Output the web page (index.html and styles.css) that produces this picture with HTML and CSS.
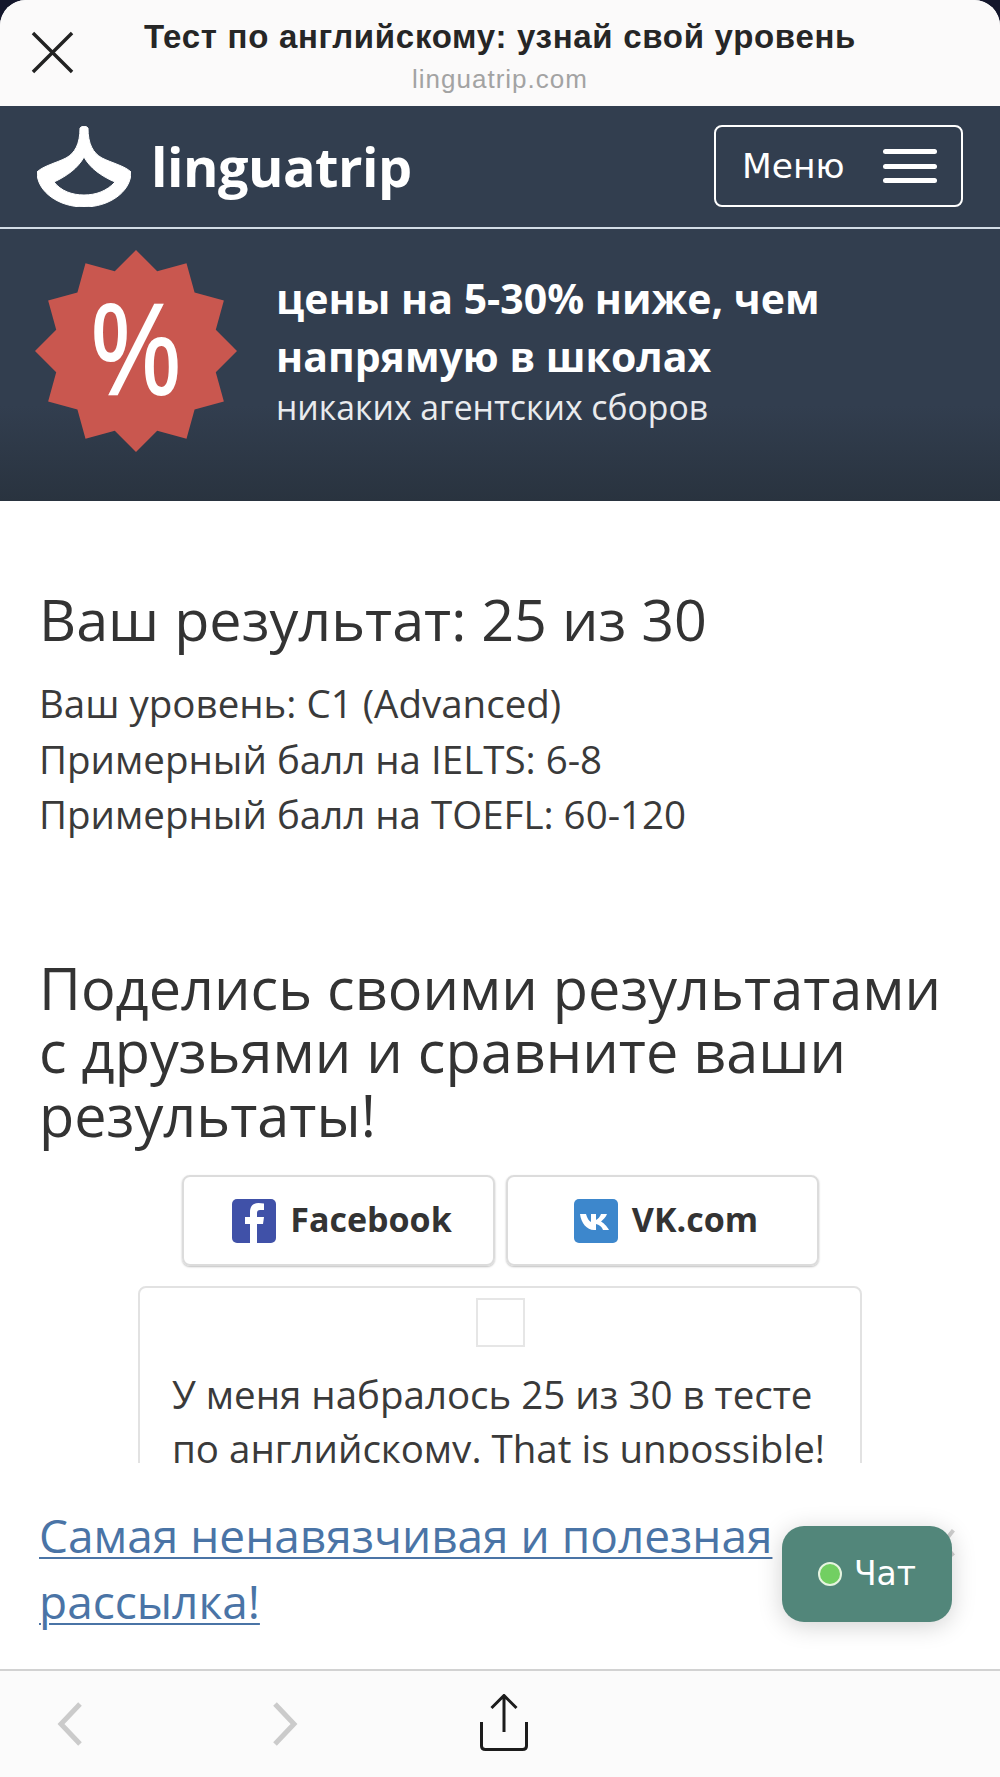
FILE: index.html
```html
<!DOCTYPE html>
<html lang="ru">
<head>
    <meta charset="UTF-8">
    <meta name="viewport" content="width=device-width, initial-scale=1.0">
    <title>Тест по английскому: узнай свой уровень</title>
    <link rel="stylesheet" href="styles.css">
</head>
<body>
<div class="sheet">
    <div class="topbar">
        <svg class="close-icon" viewBox="0 0 44 44"><path d="M2 2L42 42M42 2L2 42"/></svg>
        <div class="topbar-title">Тест по английскому: узнай свой уровень</div>
        <div class="topbar-url">linguatrip.com</div>
    </div>

    <div class="site-header">
        <div class="logo">
            <svg class="logo-mark" viewBox="0 0 94 81"><path fill-rule="evenodd" d="M43 2Q47 -2 51 2C51 18 56 27 65 32C75 37 88 40 94 46C94 66 72 81 47 81C22 81 0 66 0 46C6 40 19 37 29 32C38 27 43 18 43 2ZM47 31C41 42 30 50 17 56C24 65 35 69 47 69C59 69 70 65 78 56C64 50 53 42 47 31Z"/></svg>
            <span class="logo-text">linguatrip</span>
        </div>
        <div class="menu-btn">
            <span>Меню</span>
            <span class="burger"><i></i><i></i><i></i></span>
        </div>
    </div>

    <div class="banner">
        <svg class="badge" viewBox="0 0 200 200">
            <polygon points="100,0 121,21 150,13 158,42 187,50 179,79 200,100 179,121 187,150 158,158 150,187 121,179 100,200 79,179 50,187 42,158 13,150 21,121 0,100 21,79 13,50 42,42 50,13 79,21"/>
            <text x="100" y="143" text-anchor="middle" textLength="88" lengthAdjust="spacingAndGlyphs" class="badge-text">%</text>
        </svg>
        <div class="banner-text">
            <div class="banner-title">цены на 5-30% ниже, чем<br>напрямую в школах</div>
            <div class="banner-sub">никаких агентских сборов</div>
        </div>
    </div>

    <div class="content">
        <h1>Ваш результат: 25 из 30</h1>
        <p class="result">Ваш уровень: C1 (Advanced)<br>Примерный балл на IELTS: 6-8<br>Примерный балл на TOEFL: 60-120</p>
        <h2>Поделись своими результатами с друзьями и сравните ваши результаты!</h2>
        <div class="share">
            <div class="share-btn">
                <svg class="share-icon" viewBox="0 0 44 44"><rect width="44" height="44" rx="5" fill="#4051a8"/><path fill="#fff" d="M25 44V25H31L32 18H25V14C25 12 26 11 28 11H32V4.500C30 4.200 28.500 4 26.500 4C21.500 4 18 7 18 13V18H13V25H18V44Z"/></svg>
                <span class="share-label">Facebook</span>
            </div>
            <div class="share-btn">
                <svg class="share-icon" viewBox="0 0 44 44"><rect width="44" height="44" rx="5" fill="#3d87cc"/><path fill="#fff" d="M6 15H12C13 19 15 22 17 23V15H22V21C24 20 26 18 27 15H33C32 18 29 21 27 22.500C29 23.500 33 27 35 31H29C28 28 25 25.500 22 25V31H20C13 31 7 24 6 15Z"/></svg>
                <span class="share-label">VK.com</span>
            </div>
        </div>
        <div class="quote">
            <div class="quote-thumb"></div>
            <p>У меня набралось 25 из 30 в тесте по английскому. That is unpossible!</p>
        </div>
    </div>

    <div class="subscribe">
        <a href="#">Самая ненавязчивая и полезная рассылка!</a>
        <svg class="sub-close" viewBox="0 0 20 40"><path d="M2 24L18 4M2 16L18 36"/></svg>
        <div class="chat"><i class="chat-dot"></i>Чат</div>
    </div>

    <div class="toolbar">
        <svg class="nav-icon back" viewBox="0 0 26 44"><path d="M23 2L4 22L23 42"/></svg>
        <svg class="nav-icon forward" viewBox="0 0 26 44"><path d="M3 2L22 22L3 42"/></svg>
        <svg class="share-sheet" viewBox="0 0 49 57"><path d="M24.500 38V2M12 14L24.500 1.500L37 14M2 28V52Q2 55.500 6 55.500H43Q47 55.500 47 52V28"/></svg>
    </div>
</div>
</body>
</html>
```

FILE: styles.css
```css
* {
    box-sizing: border-box;
}
html, body {
    margin: 0;
    height: 100%;
}
body {
    background-color: #14172c;
    font-family: 'Open Sans', sans-serif;
    color: #333;
}
.sheet {
    position: relative;
    height: 1777px;
    display: flex;
    flex-direction: column;
    background-color: #fff;
    border-radius: 26px 26px 0 0;
    overflow: hidden;
}

/* browser top bar */
.topbar {
    position: relative;
    height: 106px;
    flex: none;
    background-color: #fbfafa;
    text-align: center;
}
.close-icon {
    position: absolute;
    left: 31px;
    top: 31px;
    width: 43px;
    height: 43px;
    fill: none;
    stroke: #222;
    stroke-width: 3.500;
}
.topbar-title {
    padding-top: 18px;
    font-family: 'Liberation Sans', Arial, sans-serif;
    font-weight: 700;
    font-size: 33px;
    line-height: 38px;
    letter-spacing: 0.7px;
    color: #262626;
}
.topbar-url {
    padding-top: 7px;
    font-family: 'Liberation Sans', Arial, sans-serif;
    font-size: 26px;
    line-height: 32px;
    letter-spacing: 1px;
    color: #a3a3a3;
}

/* site header */
.site-header {
    height: 123px;
    flex: none;
    display: flex;
    align-items: center;
    justify-content: space-between;
    padding: 0 37px 1px;
    background-color: #323e4f;
    border-bottom: 2px solid #d3dce6;
}
.logo {
    display: flex;
    align-items: center;
    gap: 20px;
}
.logo-mark {
    width: 94px;
    height: 81px;
    fill: #fff;
    stroke: #fff;
    stroke-width: 1;
    stroke-linejoin: round;
}
.logo-text {
    font-family: 'Open Sans', sans-serif;
    font-weight: 700;
    font-size: 54px;
    line-height: 70px;
    letter-spacing: -0.5px;
    color: #fff;
}
.menu-btn {
    width: 249px;
    height: 82px;
    display: flex;
    align-items: center;
    justify-content: space-between;
    padding: 0 24px 0 26px;
    border: 2px solid #fff;
    border-radius: 8px;
    font-family: 'DejaVu Sans', sans-serif;
    font-size: 34.500px;
    color: #fff;
}
.burger {
    display: flex;
    flex-direction: column;
    gap: 9.500px;
}
.burger i {
    display: block;
    width: 54px;
    height: 5px;
    border-radius: 3px;
    background-color: #fff;
}

/* banner */
.banner {
    height: 272px;
    flex: none;
    display: flex;
    align-items: flex-start;
    padding: 21px 0 0 35px;
    background: linear-gradient(#323e4f 0%, #323e4f 65%, #29333f 100%);
}
.badge {
    width: 202px;
    height: 202px;
    flex: none;
    fill: #c9574f;
}
.badge-text {
    font-family: 'Liberation Sans', Arial, sans-serif;
    font-size: 128px;
    fill: #fff;
    stroke: #fff;
    stroke-width: 2;
}
.banner-text {
    margin-left: 39px;
    padding-top: 19px;
    color: #fff;
}
.banner-title {
    font-weight: 700;
    font-size: 41px;
    line-height: 58px;
}
.banner-sub {
    font-size: 33.750px;
    line-height: 44px;
    color: #e9ebee;
}

/* main content */
.content {
    height: 962px;
    flex: none;
    padding: 0 39px;
    overflow: hidden;
    background-color: #fff;
}
h1 {
    margin: 86px 0 0;
    font-weight: 400;
    font-size: 57.500px;
    line-height: 64px;
    color: #333;
}
.result {
    margin: 25px 0 0;
    font-size: 38.500px;
    line-height: 55.500px;
    color: #3a3a3a;
}
h2 {
    margin: 113px 0 0;
    font-weight: 400;
    font-size: 57.600px;
    line-height: 63.500px;
    color: #333;
}
.share {
    display: flex;
    justify-content: center;
    gap: 11px;
    margin-top: 29px;
}
.share-btn {
    width: 313px;
    height: 91px;
    display: flex;
    align-items: center;
    justify-content: center;
    gap: 14px;
    padding-left: 8px;
    border: 2px solid #dcdcdc;
    border-radius: 8px;
    box-shadow: 0 1px 2px rgba(0, 0, 0, 0.25);
    font-weight: 700;
    font-size: 34px;
    color: #333;
}
.share-label {
    margin-bottom: 4px;
}
.share-icon {
    width: 44px;
    height: 44px;
    flex: none;
}
.quote {
    width: 724px;
    height: 300px;
    margin: 20px auto 0;
    padding: 10px 32px 0;
    border: 2px solid #e2e2e2;
    border-radius: 8px;
}
.quote-thumb {
    width: 49px;
    height: 49px;
    margin: 0 auto;
    border: 2px solid #e6e6e6;
}
.quote p {
    margin: 20px 0 0;
    font-size: 38.500px;
    line-height: 54px;
    color: #3a3a3a;
}

/* newsletter strip */
.subscribe {
    position: relative;
    height: 208px;
    flex: none;
    padding: 40px 210px 0 39px;
    font-size: 46px;
    line-height: 65.500px;
    background-color: #fff;
    border-bottom: 2px solid #d2d2d2;
}
.subscribe a {
    color: #4a74a6;
    text-decoration: underline;
    text-decoration-thickness: 2px;
    text-underline-offset: 4px;
}
.sub-close {
    position: absolute;
    right: 45px;
    top: 60px;
    width: 16px;
    height: 40px;
    fill: none;
    stroke: #cfcfcf;
    stroke-width: 5;
}
.chat {
    position: absolute;
    left: 782px;
    top: 63px;
    width: 170px;
    height: 96px;
    display: flex;
    align-items: center;
    justify-content: center;
    gap: 12px;
    background-color: #52867a;
    border-radius: 22px;
    box-shadow: 0 4px 24px rgba(0, 0, 0, 0.18);
    font-family: 'DejaVu Sans', sans-serif;
    font-size: 33px;
    line-height: 40px;
    color: #fff;
}
.chat-dot {
    width: 24px;
    height: 24px;
    border: 2px solid #e6f4e0;
    border-radius: 50%;
    background-color: #72cf62;
}

/* browser bottom bar */
.toolbar {
    position: relative;
    flex: 1;
    background-color: #fbfbfb;
}
.nav-icon {
    position: absolute;
    top: 31px;
    width: 26px;
    height: 44px;
    fill: none;
    stroke: #cbcbcb;
    stroke-width: 5;
}
.back {
    left: 57px;
}
.forward {
    left: 272px;
}
.share-sheet {
    position: absolute;
    left: 479px;
    top: 23px;
    width: 50px;
    height: 57px;
    fill: none;
    stroke: #1c1c1c;
    stroke-width: 3;
}
```
